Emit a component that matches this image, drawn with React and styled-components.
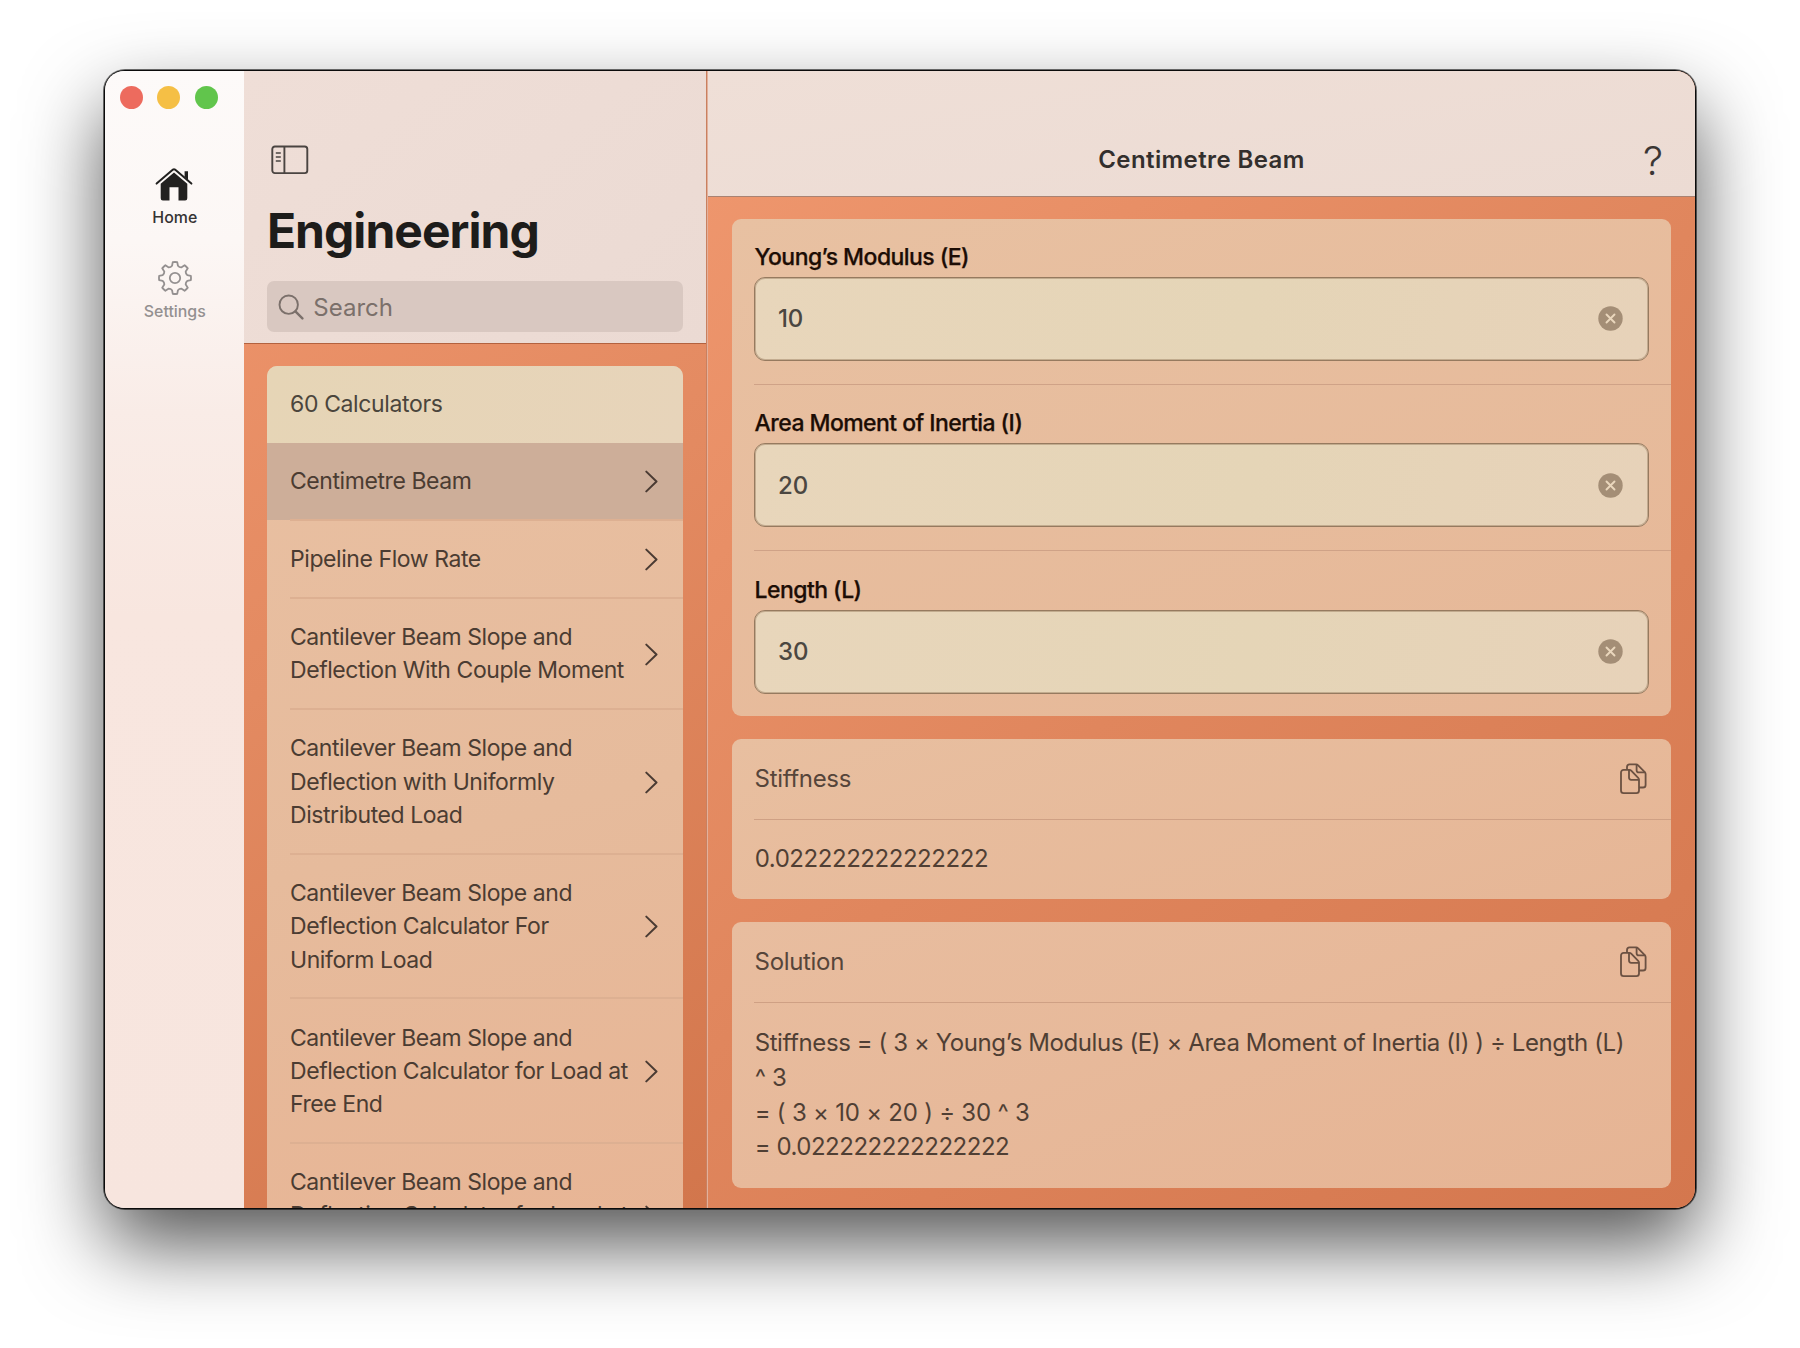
import React from "react";
import styled, { createGlobalStyle } from "styled-components";

const GlobalStyle = createGlobalStyle`
  *, *::before, *::after { box-sizing: border-box; }
  body {
    margin: 0;
    background: #fff;
    font-family: Inter, "Liberation Sans", sans-serif;
    color: #1f1d1b;
  }
`;

const Desktop = styled.main`
  height: 1348px;
  padding: 71px 105px 0;
  overflow: hidden;
`;

const Window = styled.div`
  display: flex;
  width: 1590px;
  height: 1137px;
  border-radius: 20px;
  box-shadow: 0 0 0 1px #0b0b0b, 0 0 0 2px rgba(0, 0, 0, 0.55), 0 36px 80px rgba(0, 0, 0, 0.68);
`;

const Rail = styled.nav`
  width: 139px;
  padding-top: 15px;
  border-radius: 19px 0 0 19px;
  background: linear-gradient(180deg, #fdfaf9 0%, #fcf7f5 15%, #f9ece7 30%, #f8e6df 48%, #f7e5de 100%);
`;

const TrafficLights = styled.div`
  display: flex;
  gap: 14.6px;
  padding-left: 14.9px;
  margin-bottom: 57.5px;
`;

const Light = styled.span`
  width: 23px;
  height: 23px;
  border-radius: 50%;
  background: ${(p) => p.$color};
`;

const RailItem = styled.a`
  display: flex;
  flex-direction: column;
  align-items: center;
  height: 94px;
  padding-left: 0.6px;
  font-size: 15.9px;
  line-height: 20px;
  font-weight: 500;
  color: ${(p) => (p.$active ? "#353332" : "#949090")};

  svg {
    margin: 0 ${(p) => (p.$active ? "2px" : "0")} 7px 0;
  }
`;

const Master = styled.section`
  display: flex;
  flex-direction: column;
  width: 462px;
  background: linear-gradient(150deg, #f0966d 0%, #e38a61 45%, #d2764c 100%);
`;

const MasterHeader = styled.header`
  height: 273px;
  flex: none;
  padding: 74px 22.5px 0;
  background: linear-gradient(140deg, #efded7, #ebdad3);
  border-bottom: 1px solid #b3623f;
`;

const PageTitle = styled.h1`
  margin: 26.7px 0 0 0.4px;
  font-size: 48px;
  line-height: 58px;
  font-weight: 700;
  letter-spacing: -0.97px;
  color: #1d1c1a;
`;

const SidebarToggle = styled.button`
  display: block;
  padding: 0;
  margin-left: 4.3px;
  border: 0;
  background: none;
  line-height: 0;
`;

const SearchField = styled.label`
  display: flex;
  align-items: center;
  gap: 9.5px;
  width: 416.5px;
  height: 51px;
  margin-top: 21.6px;
  padding: 0.5px 0 0 11.3px;
  border-radius: 7px;
  background: #d9c8c1;
  font-size: 24px;
  letter-spacing: 0;
  color: #7b706b;
`;

const Divider = styled.div`
  width: 2px;
  border-left: 1px solid #c9805f;
  background: #e3b09b;
`;

const ListScroll = styled.div`
  flex: 1;
  min-height: 0;
  padding: 22px 23px 0;
  overflow: hidden;
`;

const List = styled.ul`
  margin: 0;
  padding: 0;
  width: 416px;
  list-style: none;
  border-radius: 10px 10px 0 0;
  overflow: hidden;
  background: linear-gradient(165deg, #e9c0a2, #e6bb9c 50%, #e8b494);
`;

const ListHeading = styled.li`
  display: flex;
  align-items: center;
  height: 77px;
  padding: 0 23px 1px;
  background: linear-gradient(100deg, #e6d5b6, #e7d4ba);
  font-size: 23px;
  letter-spacing: -0.37px;
  color: #4b453c;
`;

const ListRow = styled.li`
  padding-left: 23px;
  background: ${(p) =>
    p.$selected ? "linear-gradient(#cdae99, #cdae99) 0 0 / 100% 77px no-repeat" : "transparent"};
`;

const ListRowBody = styled.div`
  display: flex;
  align-items: center;
  justify-content: space-between;
  padding: 22.1px 25.5px 20.6px 0;
  border-bottom: 2px solid #ddb092;
  font-size: 23px;
  line-height: 33.3px;
  letter-spacing: -0.43px;
  color: #4b3c32;
  white-space: pre-line;
`;

const Detail = styled.section`
  display: flex;
  flex-direction: column;
  width: 987px;
  border-radius: 0 19px 19px 0;
  overflow: hidden;
  background: linear-gradient(140deg, #f0986f 0%, #e0865d 50%, #d4774e 100%);
`;

const DetailHeader = styled.header`
  display: grid;
  grid-template-columns: 1fr auto 1fr;
  align-items: center;
  height: 125.5px;
  flex: none;
  padding: 52px 32px 0;
  background: linear-gradient(170deg, #efdfd7, #ecdbd3);
  border-bottom: 1px solid #a98272;
`;

const DetailTitle = styled.h2`
  grid-column: 2;
  margin: 0;
  font-size: 24px;
  font-weight: 600;
  letter-spacing: 0.4px;
  color: #332f2d;
`;

const HelpButton = styled.button`
  justify-self: end;
  padding: 3px 0 0;
  border: 0;
  background: none;
  font: 300 40px/44px Inter, "Liberation Sans", sans-serif;
  color: #3b3634;
`;

const Cards = styled.div`
  display: flex;
  flex-direction: column;
  gap: 22.7px;
  padding: 22.3px 24.3px 0 23.5px;
`;

const Card = styled.article`
  padding-left: 22.5px;
  height: ${(p) => p.$height};
  border-radius: 9px;
  background: linear-gradient(160deg, ${(p) => p.$from}, ${(p) => p.$to});
`;

const Field = styled.div`
  height: 165px;
  padding: 21px 21.5px 0 0;

  & + & {
    height: 166.5px;
    padding-top: 21.5px;
    border-top: 1px solid #cfa287;
  }
`;

const FieldLabel = styled.label`
  display: block;
  height: 37px;
  padding-left: 0.6px;
  line-height: 34px;
  font-size: 23px;
  font-weight: 500;
  letter-spacing: -0.56px;
  color: #1c0d05;
  -webkit-text-stroke: 0.25px currentColor;
`;

const InputBox = styled.div`
  display: flex;
  align-items: center;
  justify-content: space-between;
  height: 84px;
  padding: 0 25px 0 23.1px;
  border: 1px solid #967a5f;
  border-radius: 11px;
  background: linear-gradient(100deg, #e8d6bb, #e5d5b7 55%, #e7d2b9);
  box-shadow: inset 0 0 0 1px rgba(140, 110, 80, 0.4);
  font-size: 24px;
  font-weight: 450;
  letter-spacing: -0.2px;
  color: #4b4741;
`;

const CardHead = styled.div`
  display: flex;
  align-items: center;
  justify-content: space-between;
  height: 81px;
  padding: 0 24px 1px 0.6px;
  border-bottom: 1px solid #cfa084;
  font-size: 24px;
  letter-spacing: -0.33px;
  color: #56453a;

  svg {
    margin-top: 1.5px;
  }
`;

const CardBody = styled.div`
  padding: ${(p) => p.$top} 0 0 0.7px;
  color: #503f34;
`;

const Line = styled.p`
  margin: 0;
  font-size: 24px;
  line-height: 34.7px;
  letter-spacing: ${(p) => p.$tracking};
  white-space: pre-line;
`;

const HomeIcon = () => (
  <svg width="38" height="34" viewBox="0 0 38 34" fill="#222120">
    <path d="M19 5.6 32.3 16.8V31.2a2.2 2.2 0 0 1-2.2 2.2h-6.6V20.3h-9v13.1H7.9a2.2 2.2 0 0 1-2.2-2.2V16.8Z" />
    <path d="M1.6 16.6 18 2.6q1-.8 2 0L36.4 16.6" fill="none" stroke="#fcf8f6" strokeWidth="4.4" strokeLinecap="round" strokeLinejoin="round" />
    <path d="M1.6 16.6 18 2.6q1-.8 2 0L36.4 16.6" fill="none" stroke="#222120" strokeWidth="2" strokeLinecap="round" strokeLinejoin="round" />
    <path d="M29.6 4.2h3.4v8.8l-3.4-2.9Z" />
  </svg>
);

const gearPath = (() => {
  const pts = [];
  const teeth = 8;
  for (let i = 0; i < teeth; i++) {
    const a = (i / teeth) * 360;
    [[-13.5, 12.6], [-8, 16], [8, 16], [13.5, 12.6]].forEach(([d, r]) => {
      const t = ((a + d - 90) * Math.PI) / 180;
      pts.push(`${(17 + r * Math.cos(t)).toFixed(2)} ${(17 + r * Math.sin(t)).toFixed(2)}`);
    });
  }
  let d = `M${pts[0]}`;
  for (let i = 0; i < teeth; i++) {
    const k = i * 4;
    const next = pts[(k + 4) % pts.length];
    d += `L${pts[k + 1]}A15.6 15.6 0 0 1 ${pts[k + 2]}L${pts[k + 3]}A4.2 4.2 0 0 0 ${next}`;
  }
  return `${d}Z`;
})();

const GearIcon = () => (
  <svg width="34" height="34" viewBox="0 0 34 34" fill="none" stroke="#949090" strokeWidth="1.8" strokeLinejoin="round">
    <path d={gearPath} />
    <circle cx="17" cy="17" r="5.2" />
  </svg>
);

const SidebarIcon = () => (
  <svg width="38" height="30" viewBox="0 0 38 30" fill="none" stroke="#4a4441" strokeWidth="1.9">
    <rect x="1.3" y="1.5" width="35" height="26.6" rx="2.6" />
    <path d="M13.4 1.5v26.6" />
    <path d="M4.8 8h5M4.8 12h5M4.8 16h5" strokeWidth="1.5" />
  </svg>
);

const SearchIcon = () => (
  <svg width="26" height="26" viewBox="0 0 26 26" fill="none" stroke="#7b706b" strokeWidth="1.9" strokeLinecap="round">
    <circle cx="10.7" cy="10.7" r="9.2" />
    <path d="m17.4 17.4 7 7" strokeWidth="2.4" />
  </svg>
);

const ChevronIcon = () => (
  <svg width="13" height="23" viewBox="0 0 13 23" fill="none" stroke="#4a3b33" strokeWidth="2" strokeLinecap="round" strokeLinejoin="round">
    <path d="m1.3 1.6 10.2 9.9L1.3 21.4" />
  </svg>
);

const ClearIcon = () => (
  <svg width="25" height="25" viewBox="0 0 25 25">
    <circle cx="12.5" cy="12.5" r="12.2" fill="#a48e76" />
    <path d="m8.5 8.5 8 8m0-8-8 8" stroke="#ead7bd" strokeWidth="1.9" strokeLinecap="round" />
  </svg>
);

const CopyIcon = () => (
  <svg width="27" height="32" viewBox="0 0 27 32" fill="none" stroke="#6b5142" strokeWidth="1.8" strokeLinejoin="round">
    <path d="M7 6.6V4a2.6 2.6 0 0 1 2.6-2.6h6.6q1 0 1.7.8l6.9 7q.8.8.8 1.8v10.9a2.6 2.6 0 0 1-2.6 2.6H19" />
    <path d="M16.6 1.6v5.6q0 2.2 2.2 2.2h6.4" />
    <path d="M9.4 6.8H3.6A2.6 2.6 0 0 0 1 9.4v18.2a2.6 2.6 0 0 0 2.6 2.6h12.8a2.6 2.6 0 0 0 2.6-2.6v-11q0-1-.8-1.8l-7-7.2q-.8-.8-1.8-.8Z" />
    <path d="M9 7v7.6q0 2.2 2.2 2.2H19" />
  </svg>
);

const calculators = [
  { name: "Centimetre Beam", selected: true },
  { name: "Pipeline Flow Rate" },
  { name: "Cantilever Beam Slope and\nDeflection With Couple Moment" },
  { name: "Cantilever Beam Slope and\nDeflection with Uniformly\nDistributed Load" },
  { name: "Cantilever Beam Slope and\nDeflection Calculator For\nUniform Load" },
  { name: "Cantilever Beam Slope and\nDeflection Calculator for Load at\nFree End" },
  { name: "Cantilever Beam Slope and\nDeflection Calculator for Load at\n\u00a0" },
];

const fields = [
  ["Young’s Modulus (E)", "10"],
  ["Area Moment of Inertia (I)", "20"],
  ["Length (L)", "30"],
];

export default function App() {
  return (
    <>
      <GlobalStyle />
      <Desktop>
        <Window>
          <Rail>
            <TrafficLights>
              <Light $color="#ed6b5e" />
              <Light $color="#f5bf45" />
              <Light $color="#61c54c" />
            </TrafficLights>
            <RailItem $active>
              <HomeIcon />
              Home
            </RailItem>
            <RailItem>
              <GearIcon />
              Settings
            </RailItem>
          </Rail>
          <Master>
            <MasterHeader>
              <SidebarToggle>
                <SidebarIcon />
              </SidebarToggle>
              <PageTitle>Engineering</PageTitle>
              <SearchField>
                <SearchIcon />
                Search
              </SearchField>
            </MasterHeader>
            <ListScroll>
              <List>
                <ListHeading>60 Calculators</ListHeading>
                {calculators.map((c, i) => (
                  <ListRow key={i} $selected={c.selected}>
                    <ListRowBody>
                      {c.name}
                      <ChevronIcon />
                    </ListRowBody>
                  </ListRow>
                ))}
              </List>
            </ListScroll>
          </Master>
          <Divider />
          <Detail>
            <DetailHeader>
              <DetailTitle>Centimetre Beam</DetailTitle>
              <HelpButton>?</HelpButton>
            </DetailHeader>
            <Cards>
              <Card $height="497.3px" $from="#e8c1a2" $to="#e6b797">
                {fields.map(([label, value]) => (
                  <Field key={label}>
                    <FieldLabel>{label}</FieldLabel>
                    <InputBox>
                      {value}
                      <ClearIcon />
                    </InputBox>
                  </Field>
                ))}
              </Card>
              <Card $height="160.3px" $from="#e8bfa0" $to="#e6b696">
                <CardHead>
                  Stiffness
                  <CopyIcon />
                </CardHead>
                <CardBody $top="22.4px">
                  <Line $tracking="-0.44px">0.022222222222222</Line>
                </CardBody>
              </Card>
              <Card $height="266px" $from="#e8bd9f" $to="#e6b494">
                <CardHead>
                  Solution
                  <CopyIcon />
                </CardHead>
                <CardBody $top="23.4px">
                  <Line $tracking="-0.41px">
                    {"Stiffness = ( 3 × Young’s Modulus (E) × Area Moment of Inertia (I) ) ÷ Length (L)\n^ 3"}
                  </Line>
                  <Line $tracking="-0.23px">{"= ( 3 × 10 × 20 ) ÷ 30 ^ 3"}</Line>
                  <Line $tracking="-0.47px">= 0.022222222222222</Line>
                </CardBody>
              </Card>
            </Cards>
          </Detail>
        </Window>
      </Desktop>
    </>
  );
}
